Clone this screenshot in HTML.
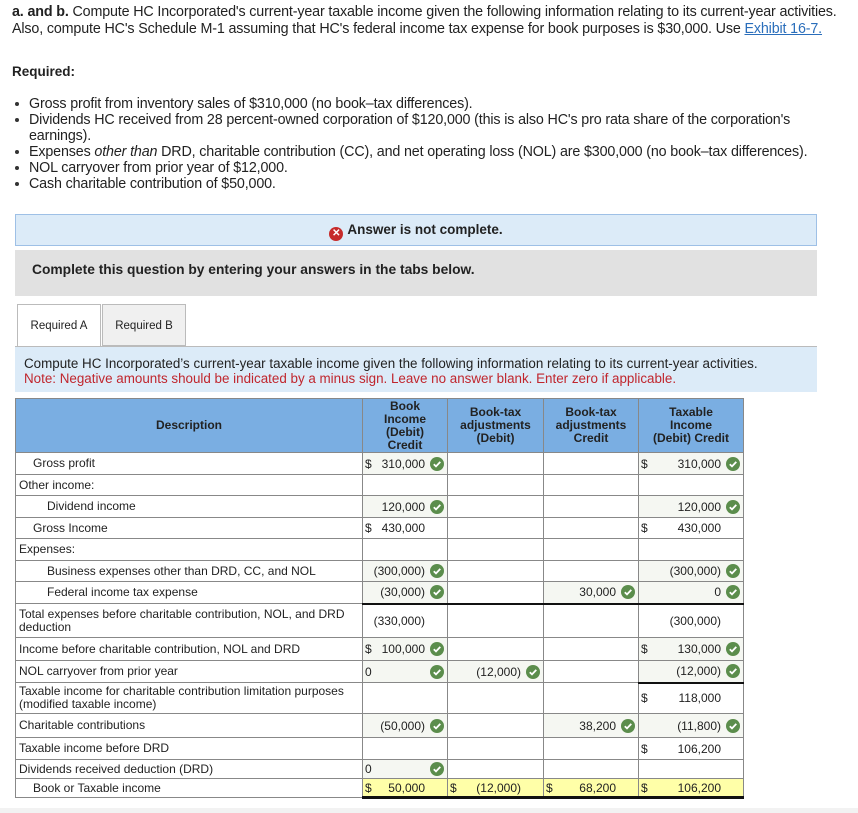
<!DOCTYPE html>
<html><head><meta charset="utf-8"><style>
*{margin:0;padding:0;box-sizing:border-box}
body{width:858px;height:813px;background:#fff;position:relative;font-family:"Liberation Sans",Arial,sans-serif;color:#222;overflow:hidden}
.top{position:absolute;left:12px;top:4px;font-size:14.3px;line-height:17px;width:846px;letter-spacing:-0.15px}
.top a{color:#2a6ebb;text-decoration:underline}
.req{position:absolute;left:12px;top:64px;font-size:13.5px;font-weight:bold}
ul{position:absolute;left:12px;top:96px;font-size:14.3px;line-height:16px;list-style:none;letter-spacing:-0.15px;width:806px}
ul li{padding-left:17px;position:relative}
ul li:before{content:"";position:absolute;left:3px;top:6px;width:4px;height:4px;border-radius:2px;background:#333}
.ans{position:absolute;left:15px;top:214px;width:802px;height:32px;background:#dcebf8;border:1px solid #9ec0e6;text-align:center;font-size:13.5px;font-weight:bold;line-height:30px}
.ans .x{display:inline-block;width:14px;height:14px;border-radius:7px;background:#c62b2b;color:#fff;font-size:10px;line-height:14px;vertical-align:-2px;margin-right:4px}
.gray{position:absolute;left:15px;top:250px;width:802px;height:46px;background:#e1e1e1;font-size:13.8px;font-weight:bold;padding:12px 0 0 17px}
.tab{position:absolute;top:304px;height:43px;border:1px solid #bbb;font-size:11.5px;line-height:42px;text-align:center}
.ins{position:absolute;left:15px;top:346px;width:802px;height:46px;background:#dcebf8;border-top:1px solid #bbb;font-size:13.4px;padding:9px 0 0 9px;line-height:15px}
.ins .n{color:#c0262d}
table{position:absolute;left:15px;top:398px;border-collapse:collapse;table-layout:fixed;font-size:12px}
td,th{border:1px solid #888;padding:0;vertical-align:middle}
th{background:#7aaee2;font-weight:bold;color:#222;font-size:12px;line-height:13px;text-align:center}
td.d{padding-left:3px;line-height:13px}
td.i1{padding-left:17px}td.i2{padding-left:31px}
.c{display:flex;align-items:center;height:100%;padding-left:2px;position:relative}
.c .s{position:absolute;left:2px}
.c .v{margin-left:auto;margin-right:22px}
.g{background:#f5f7f2}
.ck{position:absolute;right:3px;top:50%;margin-top:-7px;width:14px;height:14px}
.y{background:#ffffa8;border-bottom:3px solid #111}
.bb{border-bottom:2px solid #111}
</style></head><body>
<div class="top"><b>a. and b.</b> Compute HC Incorporated's current-year taxable income given the following information relating to its current-year activities. Also, compute HC's Schedule M-1 assuming that HC's federal income tax expense for book purposes is $30,000. Use <a>Exhibit 16-7.</a></div>
<div class="req">Required:</div>
<ul>
<li>Gross profit from inventory sales of $310,000 (no book–tax differences).</li>
<li>Dividends HC received from 28 percent-owned corporation of $120,000 (this is also HC's pro rata share of the corporation's earnings).</li>
<li>Expenses <i>other than</i> DRD, charitable contribution (CC), and net operating loss (NOL) are $300,000 (no book–tax differences).</li>
<li>NOL carryover from prior year of $12,000.</li>
<li>Cash charitable contribution of $50,000.</li>
</ul>
<div class="ans"><span class="x">✕</span>Answer is not complete.</div>
<div class="gray">Complete this question by entering your answers in the tabs below.</div>
<div class="tab" style="left:17px;width:84px;background:#fff;border-bottom:none">Required A</div>
<div class="tab" style="left:102px;width:84px;background:#f0f0f0;height:42px">Required B</div>
<div class="ins">Compute HC Incorporated’s current-year taxable income given the following information relating to its current-year activities.<br><span class="n">Note: Negative amounts should be indicated by a minus sign. Leave no answer blank. Enter zero if applicable.</span></div>
<svg width="0" height="0" style="position:absolute"><defs><symbol id="k" viewBox="0 0 14 14"><circle cx="7" cy="7" r="7" fill="#5b8d4c"/><path d="M3.8 7.2l2.2 2.2 4.3-4.5" stroke="#fff" stroke-width="1.8" fill="none"/></symbol></defs></svg>
<table>
<colgroup><col style="width:347px"><col style="width:85px"><col style="width:96px"><col style="width:95px"><col style="width:105px"></colgroup>
<tr style="height:54px"><th>Description</th><th>Book<br>Income<br>(Debit)<br>Credit</th><th>Book-tax<br>adjustments<br>(Debit)</th><th>Book-tax<br>adjustments<br>Credit</th><th>Taxable<br>Income<br>(Debit) Credit</th></tr>
<tr style="height:22px"><td class="d i1">Gross profit</td><td class="g"><div class="c"><span class="s">$</span><span class="v">310,000</span><svg class="ck"><use href="#k"/></svg></div></td><td></td><td></td><td class="g"><div class="c"><span class="s">$</span><span class="v">310,000</span><svg class="ck"><use href="#k"/></svg></div></td></tr>
<tr style="height:21px"><td class="d">Other income:</td><td></td><td></td><td></td><td></td></tr>
<tr style="height:22px"><td class="d i2">Dividend income</td><td class="g"><div class="c"><span class="v">120,000</span><svg class="ck"><use href="#k"/></svg></div></td><td></td><td></td><td class="g"><div class="c"><span class="v">120,000</span><svg class="ck"><use href="#k"/></svg></div></td></tr>
<tr style="height:21px"><td class="d i1">Gross Income</td><td><div class="c"><span class="s">$</span><span class="v">430,000</span></div></td><td></td><td></td><td><div class="c"><span class="s">$</span><span class="v">430,000</span></div></td></tr>
<tr style="height:22px"><td class="d">Expenses:</td><td></td><td></td><td></td><td></td></tr>
<tr style="height:21px"><td class="d i2">Business expenses other than DRD, CC, and NOL</td><td class="g"><div class="c"><span class="v">(300,000)</span><svg class="ck"><use href="#k"/></svg></div></td><td></td><td></td><td class="g"><div class="c"><span class="v">(300,000)</span><svg class="ck"><use href="#k"/></svg></div></td></tr>
<tr style="height:22px"><td class="d i2">Federal income tax expense</td><td class="g bb"><div class="c"><span class="v">(30,000)</span><svg class="ck"><use href="#k"/></svg></div></td><td class="bb"></td><td class="g bb"><div class="c"><span class="v">30,000</span><svg class="ck"><use href="#k"/></svg></div></td><td class="g bb"><div class="c"><span class="v">0</span><svg class="ck"><use href="#k"/></svg></div></td></tr>
<tr style="height:34px"><td class="d">Total expenses before charitable contribution, NOL, and DRD deduction</td><td><div class="c"><span class="v" style="margin-right:22px">(330,000)</span></div></td><td></td><td></td><td><div class="c"><span class="v">(300,000)</span></div></td></tr>
<tr style="height:23px"><td class="d">Income before charitable contribution, NOL and DRD</td><td class="g"><div class="c"><span class="s">$</span><span class="v">100,000</span><svg class="ck"><use href="#k"/></svg></div></td><td></td><td></td><td class="g"><div class="c"><span class="s">$</span><span class="v">130,000</span><svg class="ck"><use href="#k"/></svg></div></td></tr>
<tr style="height:22px"><td class="d">NOL carryover from prior year</td><td class="g"><div class="c"><span class="s">0</span><svg class="ck"><use href="#k"/></svg></div></td><td class="g"><div class="c"><span class="v">(12,000)</span><svg class="ck"><use href="#k"/></svg></div></td><td></td><td class="g bb"><div class="c"><span class="v">(12,000)</span><svg class="ck"><use href="#k"/></svg></div></td></tr>
<tr style="height:31px"><td class="d">Taxable income for charitable contribution limitation purposes (modified taxable income)</td><td></td><td></td><td></td><td><div class="c"><span class="s">$</span><span class="v">118,000</span></div></td></tr>
<tr style="height:24px"><td class="d">Charitable contributions</td><td class="g"><div class="c"><span class="v">(50,000)</span><svg class="ck"><use href="#k"/></svg></div></td><td></td><td class="g"><div class="c"><span class="v">38,200</span><svg class="ck"><use href="#k"/></svg></div></td><td class="g"><div class="c"><span class="v">(11,800)</span><svg class="ck"><use href="#k"/></svg></div></td></tr>
<tr style="height:22px"><td class="d">Taxable income before DRD</td><td></td><td></td><td></td><td><div class="c"><span class="s">$</span><span class="v">106,200</span></div></td></tr>
<tr style="height:19px"><td class="d">Dividends received deduction (DRD)</td><td class="g"><div class="c"><span class="s">0</span><svg class="ck"><use href="#k"/></svg></div></td><td></td><td></td><td></td></tr>
<tr style="height:19px"><td class="d i1">Book or Taxable income</td><td class="y"><div class="c"><span class="s">$</span><span class="v">50,000</span></div></td><td class="y"><div class="c"><span class="s">$</span><span class="v">(12,000)</span></div></td><td class="y"><div class="c"><span class="s">$</span><span class="v">68,200</span></div></td><td class="y"><div class="c"><span class="s">$</span><span class="v">106,200</span></div></td></tr>
</table>
<div style="position:absolute;left:0;top:808px;width:858px;height:5px;background:#f2f2f2"></div>
</body></html>
